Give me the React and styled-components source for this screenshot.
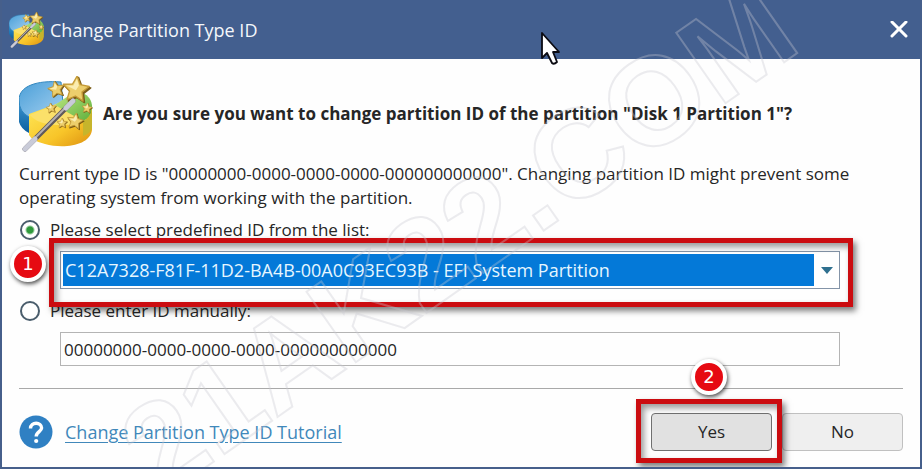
import React, { useState } from 'react';
import styled, { createGlobalStyle } from 'styled-components';

const EMPTY_ID = '00000000-0000-0000-0000-000000000000';

const App = () => {
    const [mode, setMode] = useState('list');
    const [manualId, setManualId] = useState(EMPTY_ID);

    return (
        <>
            <GlobalStyle />
            <DialogStyle>
                <TitleBarStyle>
                    <WizardIcon size={36} />
                    <TitleStyle>Change Partition Type ID</TitleStyle>
                    <CloseButtonStyle type="button" aria-label="Close">
                        <svg width="18" height="18" viewBox="0 0 18 18">
                            <path d="M2 1L16 15M16 1L2 15" stroke="#fff" strokeWidth="3" strokeLinecap="round" />
                        </svg>
                    </CloseButtonStyle>
                </TitleBarStyle>

                <BodyStyle>
                    <QuestionStyle>
                        <WizardIcon size={76} />
                        <HeadingStyle>
                            Are you sure you want to change partition ID of the partition "Disk 1 Partition 1"?
                        </HeadingStyle>
                    </QuestionStyle>

                    <NoteStyle>
                        Current type ID is "{EMPTY_ID}". Changing partition ID might prevent some operating system
                        from working with the partition.
                    </NoteStyle>

                    <OptionStyle>
                        <RadioStyle
                            id="mode-list"
                            type="radio"
                            name="mode"
                            checked={mode === 'list'}
                            onChange={() => setMode('list')}
                        />
                        <label htmlFor="mode-list">Please select predefined ID from the list:</label>
                    </OptionStyle>
                    <FieldStyle>
                        <SelectBoxStyle>
                            <SelectStyle aria-label="Predefined ID">
                                <option>C12A7328-F81F-11D2-BA4B-00A0C93EC93B - EFI System Partition</option>
                            </SelectStyle>
                            <ArrowStyle>
                                <svg width="12" height="7" viewBox="0 0 12 7">
                                    <path d="M0 0H12L6 7Z" fill="#2f708f" />
                                </svg>
                            </ArrowStyle>
                        </SelectBoxStyle>
                        <MarkStyle $inset="-13px -13px -18px -11px" />
                        <BadgeStyle $left="-50px" $top="-5px">1</BadgeStyle>
                    </FieldStyle>

                    <OptionStyle>
                        <RadioStyle
                            id="mode-manual"
                            type="radio"
                            name="mode"
                            checked={mode === 'manual'}
                            onChange={() => setMode('manual')}
                        />
                        <label htmlFor="mode-manual">Please enter ID manually:</label>
                    </OptionStyle>
                    <FieldStyle>
                        <InputStyle
                            type="text"
                            aria-label="Manual ID"
                            value={manualId}
                            onChange={e => setManualId(e.target.value)}
                        />
                    </FieldStyle>

                    <FooterStyle>
                        <HelpIcon />
                        <LinkStyle href="#tutorial">Change Partition Type ID Tutorial</LinkStyle>
                        <ButtonsStyle>
                            <ButtonWrapStyle>
                                <ButtonStyle type="button" $primary>Yes</ButtonStyle>
                                <MarkStyle $inset="-14px -10px -12px -15px" />
                                <BadgeStyle $left="40px" $top="-54px">2</BadgeStyle>
                            </ButtonWrapStyle>
                            <ButtonStyle type="button">No</ButtonStyle>
                        </ButtonsStyle>
                    </FooterStyle>
                </BodyStyle>

                <WatermarkStyle aria-hidden="true">21AK22.COM</WatermarkStyle>
                <PointerStyle width="20" height="34" viewBox="0 0 20 34">
                    <path
                        d="M1 1V26L6 21L11 31Q13 33 16 30L12 20H18Z"
                        fill="#fff"
                        stroke="#0b0b12"
                        strokeWidth="1.8"
                        strokeLinejoin="round"
                    />
                </PointerStyle>
            </DialogStyle>
        </>
    );
};

const Star = ({ x, y, r, turn = 0 }) => (
    <g transform={`translate(${x} ${y}) rotate(${turn}) scale(${r})`}>
        <path
            d="M0 -1L.3 -.36L1 -.28L.48 .2L.62 .88L0 .54L-.62 .88L-.48 .2L-1 -.28L-.3 -.36Z"
            transform="translate(.12 .1)"
            fill="#7b5c18"
            stroke="#7b5c18"
            strokeWidth=".12"
            strokeLinejoin="round"
        />
        <path
            d="M0 -1L.3 -.36L1 -.28L.48 .2L.62 .88L0 .54L-.62 .88L-.48 .2L-1 -.28L-.3 -.36Z"
            fill="#ecce6c"
            stroke="#c49a37"
            strokeWidth=".1"
            strokeLinejoin="round"
        />
        <path d="M0 -.8L.2 -.28L0 .1L-.75 -.2L-.22 -.26Z" fill="#faecb0" />
    </g>
);

// Disk cut in three slices with a magic wand over it
const WizardIcon = ({ size }) => (
    <svg width={size} height={size} viewBox="2 0 76 76" aria-hidden="true">
        <defs>
            <linearGradient id="blueTop" x1="0" y1="0" x2="1" y2="1">
                <stop offset="0" stopColor="#4a9fd8" />
                <stop offset="1" stopColor="#a4d0f0" />
            </linearGradient>
            <linearGradient id="blueSide" x1="0" y1="0" x2="0" y2="1">
                <stop offset="0" stopColor="#3c97d3" />
                <stop offset="1" stopColor="#0d609f" />
            </linearGradient>
            <linearGradient id="yellowSide" x1="0" y1="0" x2="1" y2="1">
                <stop offset="0" stopColor="#ffe95a" />
                <stop offset=".6" stopColor="#f8c529" />
                <stop offset="1" stopColor="#dd9010" />
            </linearGradient>
            <linearGradient id="greenTop" x1="0" y1="0" x2="1" y2="1">
                <stop offset="0" stopColor="#c2ea86" />
                <stop offset="1" stopColor="#5eaf3c" />
            </linearGradient>
        </defs>
        <path d="M2 24V46Q4 53 12 57V41L39 28Z" fill="url(#blueSide)" />
        <path d="M2 24C2 10 20 4 44 6L46 27L12 41Q2 36 2 24Z" fill="url(#blueTop)" stroke="#2f86bf" />
        <path d="M75 29V54C73 70 46 73 28 68Q15 65 12 59V38L42 27Z" fill="url(#yellowSide)" />
        <path d="M13 39L42 27L72 42Q60 50 40 49Q20 48 13 39Z" fill="#fbe06a" />
        <path d="M38 29L60 14Q76 20 75 32Q74 42 66 45L50 36Z" fill="url(#greenTop)" />
        <path d="M75 34V52Q73 58 66 60V45Q74 41 75 34Z" fill="#c6b52c" />
        <Star x={39} y={13} r={8} turn={-12} />
        <Star x={59} y={13} r={13} turn={5} />
        <Star x={34} y={32} r={5} turn={-8} />
        <Star x={70} y={32} r={5} turn={8} />
        <Star x={45} y={47} r={5} />
        <Star x={58} y={45} r={8} turn={10} />
        <path d="M8 73L56 25" stroke="#5f595c" strokeWidth="5" strokeLinecap="round" />
        <path d="M8 72L55 25" stroke="#b5b0b0" strokeWidth="2" strokeLinecap="round" />
        <path d="M8 73L18 63M49 32L56 25" stroke="#c9cbd8" strokeWidth="5" strokeLinecap="round" />
    </svg>
);

const HelpIcon = () => (
    <svg width="34" height="34" viewBox="0 0 34 34" aria-hidden="true">
        <circle cx="17" cy="17" r="16.5" fill="#2f80c3" />
        <path
            d="M11.5 13.5C11.5 6.5 22.8 6.8 22.6 13C22.5 16.6 17.2 16.8 17.2 21.5"
            fill="none"
            stroke="#fff"
            strokeWidth="3.4"
        />
        <circle cx="17.2" cy="26" r="2.1" fill="#fff" />
    </svg>
);

const GlobalStyle = createGlobalStyle`
    * {
        box-sizing: border-box;
    }

    body {
        margin: 0;
        font-family: "Open Sans", "Noto Sans", sans-serif;
        font-size: 17px;
        line-height: 24px;
        color: #262626;
    }

    button, input, select {
        font: inherit;
        color: inherit;
    }
`

const DialogStyle = styled.div`
    position: relative;
    display: flex;
    flex-direction: column;
    min-height: 100vh;
    overflow: hidden;
    background-color: #fefefe;
    border: 2px solid #465f8b;
    border-top: 0;
`

const TitleBarStyle = styled.header`
    display: flex;
    align-items: center;
    height: 59px;
    padding: 0 12px 0 7px;
    background-color: #435f8f;
    color: #f4f7fb;
`

const TitleStyle = styled.h1`
    flex: 1;
    margin: 0 0 0 5px;
    font-size: 18px;
    font-weight: 400;
`

const CloseButtonStyle = styled.button`
    display: flex;
    padding: 0;
    border: 0;
    background: none;
`

const BodyStyle = styled.main`
    display: flex;
    flex: 1;
    flex-direction: column;
    padding: 17px 17px 16px;
`

const QuestionStyle = styled.div`
    display: flex;
    align-items: center;
    gap: 8px;
`

const HeadingStyle = styled.h2`
    margin: 0;
    font-size: 17px;
    font-weight: 700;
`

const NoteStyle = styled.p`
    margin: 10px 0 8px;
`

const OptionStyle = styled.div`
    display: flex;
    align-items: center;
    gap: 10px;
    padding-left: 1px;
`

const RadioStyle = styled.input`
    appearance: none;
    width: 20px;
    height: 20px;
    margin: 0;
    border: 2px solid #4a5d6c;
    border-radius: 50%;
    background: #fff;

    &:checked {
        background: radial-gradient(circle, #2f9a3c 3px, #fff 5px);
    }
`

const FieldStyle = styled.div`
    position: relative;
    margin: 9px 63px 10px 41px;
`

const SelectBoxStyle = styled.div`
    position: relative;
    height: 38px;
    padding: 2px;
    border: 1px solid #8494a8;
    background-color: #fff;
`

const SelectStyle = styled.select`
    appearance: none;
    display: block;
    width: 100%;
    height: 32px;
    padding: 0 28px 0 2px;
    border: 0;
    border-radius: 0;
    background-color: #0479d8;
    color: #e6f6ff;
    font-size: 18px;
`

const ArrowStyle = styled.span`
    position: absolute;
    top: 0;
    right: 0;
    bottom: 0;
    display: flex;
    align-items: center;
    justify-content: center;
    width: 25px;
    background-color: #fff;
    pointer-events: none;
`

const InputStyle = styled.input`
    display: block;
    width: 100%;
    height: 34px;
    padding: 0 3px;
    border: 1px solid #b4b4b4;
    border-radius: 0;
    background-color: #fefefe;
`

const FooterStyle = styled.footer`
    display: flex;
    align-items: center;
    gap: 12px;
    margin-top: 12px;
    padding-top: 24px;
    border-top: 1px solid #a9a9a9;
`

const LinkStyle = styled.a`
    color: #4188ba;
    font-size: 18px;
    text-underline-offset: 3px;
`

const ButtonsStyle = styled.div`
    display: flex;
    gap: 10px;
    margin-left: auto;
`

const ButtonWrapStyle = styled.div`
    position: relative;
`

const ButtonStyle = styled.button`
    width: 121px;
    height: 38px;
    padding: 0;
    border: 1px solid ${props => props.$primary ? '#707070' : '#c0c0c0'};
    border-radius: 4px;
    background-color: ${props => props.$primary ? '#e1e1e1' : '#efefef'};
`

const MarkStyle = styled.div`
    position: absolute;
    z-index: 1;
    inset: ${props => props.$inset};
    border: 5px solid #cb0c10;
    box-shadow: 3px 4px 6px rgba(0, 0, 0, .5), inset 3px 4px 6px rgba(0, 0, 0, .4);
    pointer-events: none;
`

const BadgeStyle = styled.span`
    position: absolute;
    z-index: 2;
    left: ${props => props.$left};
    top: ${props => props.$top};
    display: flex;
    align-items: center;
    justify-content: center;
    width: 36px;
    height: 36px;
    border: 4px solid #fff;
    border-radius: 50%;
    background-color: #e60a12;
    box-shadow: 1px 2px 4px rgba(0, 0, 0, .7);
    color: #fff;
    font-family: "DejaVu Sans", sans-serif;
    font-size: 18px;
`

const WatermarkStyle = styled.div`
    position: absolute;
    z-index: 3;
    left: 170px;
    bottom: -47px;
    font-family: "Liberation Sans", Arial, sans-serif;
    font-size: 125px;
    font-weight: 700;
    line-height: 125px;
    white-space: nowrap;
    color: transparent;
    -webkit-text-stroke: 2px rgba(200, 200, 208, .35);
    transform: rotate(-35deg);
    transform-origin: 0 100%;
    pointer-events: none;
`

const PointerStyle = styled.svg`
    position: absolute;
    z-index: 4;
    left: 539px;
    top: 32px;
    pointer-events: none;
`

export default App;
